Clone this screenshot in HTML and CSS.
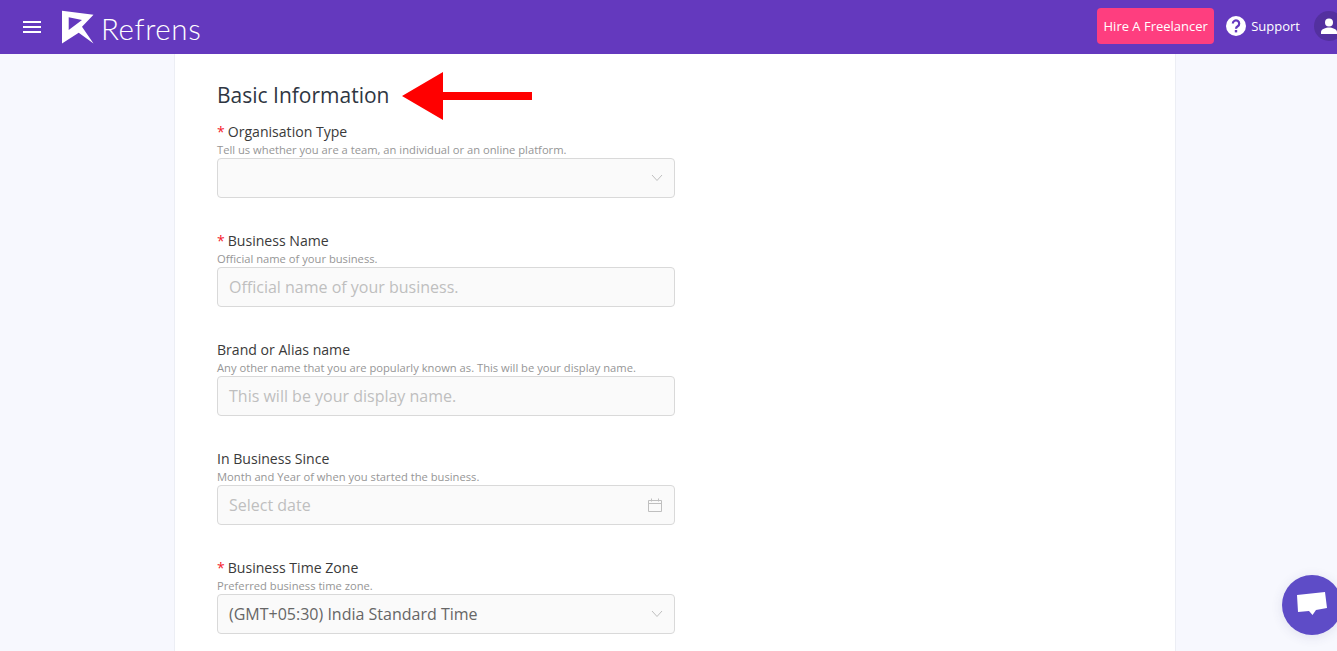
FILE: index.html
```html
<!DOCTYPE html>
<html lang="en">
<head>
<meta charset="utf-8">
<title>Refrens - Basic Information</title>
<link rel="stylesheet" href="styles.css">
</head>
<body>
<header class="topbar">
  <div class="topbar-left">
    <svg class="menu-icon" width="18" height="12" viewBox="0 0 18 12"><path d="M0 1h18M0 6h18M0 11h18" stroke="#fff" stroke-width="2"/></svg>
    <svg class="logo-mark" width="33" height="34" viewBox="0 0 33 34"><path fill="#fff" fill-rule="evenodd" d="M0 .7 31.500 4.700 20 16.700 31.500 33.500 16.700 22.700 0 33.500ZM6.700 7.300V20L20 10Z"/></svg>
    <span class="logo-text">Refrens</span>
  </div>
  <div class="topbar-right">
    <a class="hire-btn">Hire A Freelancer</a>
    <a class="support">
      <svg width="22" height="22" viewBox="0 0 22 22"><circle cx="11" cy="11" r="10" fill="#fff"/><path d="M7.800 8.600a3.200 3.200 0 1 1 4.900 2.700c-1.100.7-1.700 1.200-1.700 2.500" fill="none" stroke="#6439be" stroke-width="2.200"/><rect x="9.800" y="15" width="2.400" height="2.400" fill="#6439be"/></svg>
      <span>Support</span>
    </a>
    <span class="avatar">
      <svg width="16" height="16" viewBox="0 0 16 16"><circle cx="8" cy="4.500" r="4" fill="#fff"/><path fill="#fff" d="M0 16v-2c0-3 5-4.500 8-4.500s8 1.500 8 4.500v2Z"/></svg>
    </span>
  </div>
</header>
<main class="page">
  <section class="card">
    <div class="title-row">
      <h1 class="title">Basic Information</h1>
      <svg class="arrow" width="131" height="48" viewBox="0 0 131 48"><path fill="#f00" d="M0 24 41 0V20H130V28H41V48Z"/></svg>
    </div>
    <div class="field">
      <label class="label"><span class="req">*</span>Organisation Type</label>
      <p class="hint">Tell us whether you are a team, an individual or an online platform.</p>
      <div class="input">
        <svg class="suffix" width="12" height="8" viewBox="0 0 12 8"><path d="M1 1l5 5.500L11 1" fill="none" stroke="#bfbfbf" stroke-width="1"/></svg>
      </div>
    </div>
    <div class="field">
      <label class="label"><span class="req">*</span>Business Name</label>
      <p class="hint">Official name of your business.</p>
      <div class="input placeholder">Official name of your business.</div>
    </div>
    <div class="field">
      <label class="label">Brand or Alias name</label>
      <p class="hint">Any other name that you are popularly known as. This will be your display name.</p>
      <div class="input placeholder">This will be your display name.</div>
    </div>
    <div class="field">
      <label class="label">In Business Since</label>
      <p class="hint">Month and Year of when you started the business.</p>
      <div class="input placeholder">Select date
        <svg class="suffix cal" width="14" height="14" viewBox="0 0 14 14"><path d="M.5 2.500h13v11H.5ZM.5 5.500h13M3.500 .5v3M10.500 .5v3" fill="none" stroke="#bfbfbf" stroke-width="1"/></svg>
      </div>
    </div>
    <div class="field">
      <label class="label"><span class="req">*</span>Business Time Zone</label>
      <p class="hint">Preferred business time zone.</p>
      <div class="input value">(GMT+05:30) India Standard Time
        <svg class="suffix" width="12" height="8" viewBox="0 0 12 8"><path d="M1 1l5 5.500L11 1" fill="none" stroke="#bfbfbf" stroke-width="1"/></svg>
      </div>
    </div>
  </section>
</main>
<button class="chat" aria-label="Chat">
  <svg width="30" height="26" viewBox="0 0 30 26"><path fill="#fff" d="M0 3 28 0 30 16 19 18 15.500 23 12 19 1 20Z"/></svg>
</button>
</body>
</html>
```

FILE: styles.css
```css
* { box-sizing: border-box; }
html, body { height: 100%; }
body {
  margin: 0;
  height: 651px;
  overflow: hidden;
  background: #f7f8fe;
  font-family: "Open Sans", "Liberation Sans", sans-serif;
  color: #333;
}
.topbar {
  height: 54px;
  background: #6439be;
  display: flex;
  justify-content: space-between;
  align-items: center;
  overflow: hidden;
}
.topbar-left { display: flex; align-items: center; padding-left: 23px; }
.menu-icon { margin-right: 21px; }
.logo-mark { margin-right: 6px; }
.logo-text {
  font-family: "Lato", "Open Sans", sans-serif;
  font-weight: 300;
  font-size: 29.5px;
  line-height: 36px;
  color: #fff;
  margin-top: 4px;
  letter-spacing: .6px;
}
.topbar-right { display: flex; align-items: center; margin-right: -7px; padding-bottom: 2px; }
.hire-btn {
  width: 117px;
  height: 36px;
  border-radius: 4px;
  background: #fe3e7f;
  color: #fff;
  font-size: 13px;
  line-height: 36px;
  text-align: center;
  white-space: nowrap;
}
.support {
  display: flex;
  align-items: center;
  gap: 4px;
  margin-left: 11px;
  color: #fff;
  font-size: 13px;
}
.avatar {
  width: 30px;
  height: 30px;
  margin-left: 14px;
  border-radius: 50%;
  background: #53309f;
  display: flex;
  align-items: center;
  justify-content: center;
}
.page { display: flex; padding-left: 174px; }
.card {
  width: 1002px;
  height: 597px;
  padding: 25px 42px 0;
  background: #fff;
  border: 1px solid #eceef4;
  border-width: 0 1px;
  overflow: hidden;
}
.title-row { display: flex; align-items: center; height: 34px; }
.title {
  margin: 0 0 2px;
  font-size: 21px;
  font-weight: 400;
  line-height: 32px;
  color: #2f3642;
}
.arrow { margin-left: 12px; flex: none; }
.field { height: 109px; }
.title-row + .field { margin-top: 9px; }
.label {
  display: block;
  font-size: 14.08px;
  line-height: 20px;
  color: #3a3a3a;
}
.req { color: #f5222d; margin-right: 3px; font-size: 14px; }
.hint {
  margin: 0;
  font-size: 11.2px;
  line-height: 16px;
  color: #969696;
}
.input {
  position: relative;
  width: 458px;
  height: 40px;
  padding: 0 11px;
  border: 1px solid #d9d9d9;
  border-radius: 4px;
  background: #fafafa;
  font-size: 16px;
  line-height: 38px;
}
.placeholder { color: #bfbfbf; }
.value { color: #666; }
.suffix { position: absolute; right: 11px; top: 50%; transform: translateY(-50%); }
.cal { right: 12px; }
.chat {
  position: fixed;
  left: 1282px;
  top: 575px;
  width: 60px;
  height: 60px;
  padding: 0;
  border: 0;
  border-radius: 50%;
  background: #5e4cc7;
  box-shadow: 0 2px 12px rgba(60, 60, 120, .12);
  display: flex;
  align-items: center;
  justify-content: center;
}
```
